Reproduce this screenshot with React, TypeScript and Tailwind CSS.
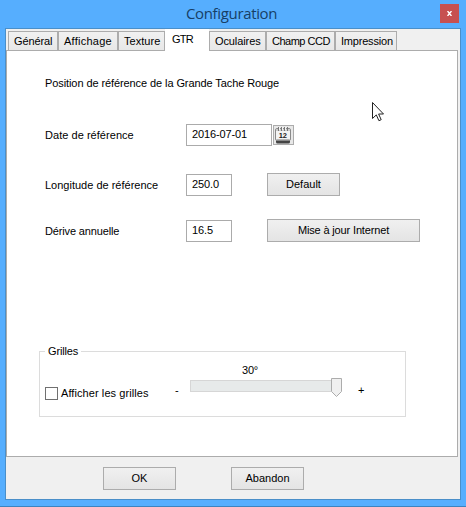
import type { ReactNode } from "react";

function Button({ className, children }: { className: string; children: ReactNode }) {
  return (
    <button
      className={`h-[23px] shrink-0 border border-[#acacac] bg-linear-to-b from-[#f0f0f0] to-[#e4e4e4] text-center leading-[21px] ${className}`}
    >
      {children}
    </button>
  );
}

function Field({ value, className }: { value: string; className: string }) {
  return (
    <div className={`h-[22px] shrink-0 border border-[#ababab] bg-white pl-[5px] leading-[19px] tracking-[-0.12px] ${className}`}>
      {value}
    </div>
  );
}

const tabs = [
  { label: "Général", style: "w-[50px] tracking-[-0.1px]" },
  { label: "Affichage", style: "w-[60px] tracking-[0.25px]" },
  { label: "Texture", style: "w-[47px] tracking-[0.05px]" },
  { label: "GTR", style: "w-[44px] tracking-[-0.8px]", active: true },
  { label: "Oculaires", style: "w-[57px] tracking-[-0.1px]" },
  { label: "Champ CCD", style: "w-[69px] tracking-[-0.5px]" },
  { label: "Impression", style: "w-[62px] tracking-[-0.2px]" },
];

function CalendarIcon() {
  return (
    <svg width="16" height="17" viewBox="0 0 16 17">
      <rect x="1" y="10" width="14" height="6.5" rx="1.5" fill="#444" />
      <rect x=".5" y="1.5" width="15" height="12" rx="1.5" fill="#f3f3f3" stroke="#8a8a8a" />
      <path d="M1 2h14v2H1z" fill="#cfcfcf" />
      <path d="M3.5 0v4M6.5 0v4M9.5 0v4M12.5 0v4" stroke="#777" fill="none" />
      <path d="M4.5 0v3M7.5 0v3M10.5 0v3" stroke="#f4f4f4" fill="none" />
      <path d="M1.5 12.5h13" stroke="#b5b5b5" />
      <text x="7.8" y="10.5" textAnchor="middle" fontFamily="Liberation Sans, sans-serif" fontWeight="bold" fontSize="7.5" fill="#222">12</text>
    </svg>
  );
}

export default function App() {
  return (
    <div className="relative flex h-[507px] w-[466px] flex-col overflow-hidden border-b border-[#3c83bf] bg-[#56aefe] font-['Liberation_Sans',Arial,sans-serif] text-[11px] text-black">
      <header className="flex h-7 shrink-0 items-start">
        <h1 className="ml-[186px] w-[254px] font-['Open_Sans',sans-serif] text-[15px] leading-[27px] tracking-[-0.35px] text-[#173f66]">
          Configuration
        </h1>
        <button className="mt-1 flex h-[19px] w-[19px] items-center justify-center bg-[#c75050]">
          <svg width="5" height="5" viewBox="0 0 5 5">
            <path d="M.5 0L4.5 5M4.5 0L.5 5" stroke="white" strokeWidth="1.4" />
          </svg>
        </button>
      </header>

      <main className="ml-[5px] flex h-[472px] w-[456px] shrink-0 flex-col border border-[#4a8fc9] bg-[#f0f0f0]">
        <nav className="flex h-[21px] shrink-0 items-end pl-[2px]">
          {tabs.map((t) =>
            t.active ? (
              <div key={t.label} className={`z-10 -mb-px h-[22px] shrink-0 bg-white pl-[7px] leading-[20px] ${t.style}`}>
                {t.label}
              </div>
            ) : (
              <div
                key={t.label}
                className={`h-[19px] shrink-0 border-t border-r border-l border-[#acacac] bg-linear-to-b from-[#f1f1f1] to-[#e8e8e8] pl-[5px] leading-[19px] whitespace-nowrap ${t.style}`}
              >
                {t.label}
              </div>
            ),
          )}
        </nav>

        <section className="mr-[2px] h-[407px] shrink-0 border border-[#acacac] bg-white pl-8">
          <p className="mt-[24px] ml-[6px] h-[16px] leading-[16px] tracking-[-0.09px]">
            Position de référence de la Grande Tache Rouge
          </p>
          <div className="mt-[33px] ml-[6px] flex h-[22px] items-center">
            <span className="w-[141px] tracking-[0.04px]">Date de référence</span>
            <Field value="2016-07-01" className="w-[86px]" />
            <button className="ml-px flex h-[20px] w-[21px] items-start justify-start border border-[#acacac] bg-[#e8e8e8] pt-px pl-px">
              <CalendarIcon />
            </button>
          </div>
          <div className="mt-[27px] ml-[6px] flex h-[23px] items-end">
            <span className="w-[141px] leading-[22px]">Longitude de référence</span>
            <Field value="250.0" className="w-[46px]" />
            <Button className="ml-[35px] w-[73px]">Default</Button>
          </div>
          <div className="mt-[23px] ml-[6px] flex h-[23px] items-end">
            <span className="w-[141px] leading-[22px] tracking-[-0.15px]">Dérive annuelle</span>
            <Field value="16.5" className="w-[46px]" />
            <Button className="ml-[35px] w-[153px] tracking-[-0.15px]">Mise à jour Internet</Button>
          </div>

          <fieldset className="mt-[101px] h-[74px] w-[367px] border border-[#dcdcdc] pl-[5px]">
            <legend className="h-[16px] px-[3px] leading-[16px] tracking-[-0.15px]">Grilles</legend>
            <div className="flex">
              <label className="mt-[28px] flex h-[13px] w-[130px] items-center">
                <span className="mr-[3px] h-[13px] w-[13px] border border-[#707070] bg-white" />
                <span className="tracking-[0.08px]">Afficher les grilles</span>
              </label>
              <span className="mt-[24px] w-[15px] leading-[14px]">-</span>
              <div className="w-[168px]">
                <div className="mt-[4px] ml-[52px] h-[14px] leading-[14px] tracking-[-0.2px]">30°</div>
                <div className="mt-px flex h-[19px] items-start">
                  <div className="mt-[2px] h-[12px] w-[141px] border border-r-0 border-[#d6d6d6] bg-[#e7eaea]" />
                  <svg width="11" height="19" viewBox="0 0 11 19">
                    <path d="M.5.5h10v13l-5 5-5-5z" fill="#f0f0f0" stroke="#acacac" />
                  </svg>
                </div>
              </div>
              <span className="mt-[24px] leading-[14px]">+</span>
            </div>
          </fieldset>
        </section>

        <footer className="mt-[10px] flex pl-[97px]">
          <Button className="w-[73px]">OK</Button>
          <Button className="ml-[55px] w-[73px]">Abandon</Button>
        </footer>
      </main>

      <svg className="absolute top-[102px] left-[372px]" width="12" height="20" viewBox="0 0 12 20">
        <path d="M.5.5v16l3.8-3.6 2.6 5.8 2.3-1-2.6-5.7h4.9z" fill="white" stroke="#222" />
      </svg>
    </div>
  );
}
